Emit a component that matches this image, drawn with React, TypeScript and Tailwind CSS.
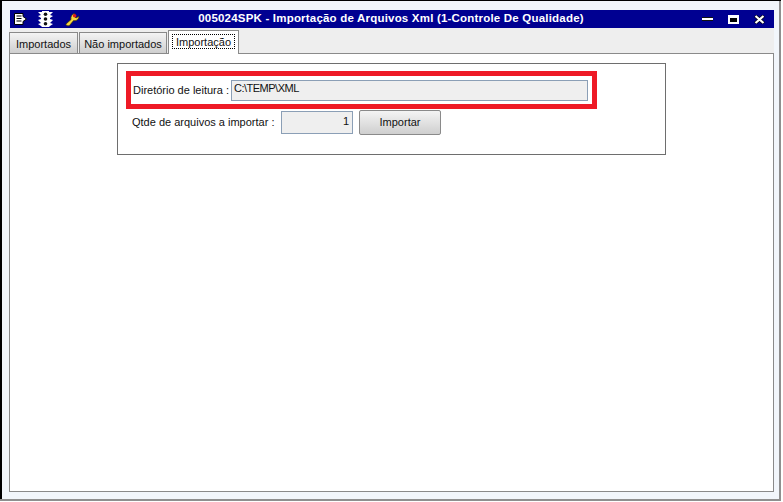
const FONT = "font-['Liberation_Sans',sans-serif]"

function TrafficLight() {
  return (
    <svg width="15" height="16" viewBox="0 0 15 16" className="block">
      <path d="M4 0h7v1h4l-3 3 3 1-3 2v1l3 1-3 3 3 1-3 2-1 1H4l-1-1-3-2 3-1-3-3 3-1V7L0 5l3-1-3-3h4z" fill="#fff" />
      <circle cx="7.5" cy="3.2" r="1.8" fill="#111" />
      <circle cx="7.5" cy="8" r="1.8" fill="#111" />
      <circle cx="7.5" cy="12.8" r="1.8" fill="#111" />
    </svg>
  )
}

function Wrench() {
  return (
    <svg width="15" height="15" viewBox="0 0 15 15" className="block">
      <path d="M0.8 12.2 6 7.6C5.4 4.6 7 2 9.6 1.4L8.6 3.6 11 6l3-1.8c0 2.8-2.4 5-5.4 4.4l-4.4 5.2H2z" fill="#f6d73f" stroke="#3c3000" strokeWidth="0.7" />
      <circle cx="9.6" cy="3.8" r="1.8" fill="#e21a1a" />
    </svg>
  )
}

function MenuIcon() {
  return (
    <svg width="13" height="12" viewBox="0 0 13 12" className="block">
      <path d="M0.5 0.5h8.5v3l3.5 2.5-3.5 2.5v3H0.5z" fill="#fff" stroke="#000" />
      <path d="M2.5 3h5M2.5 5.5h5M2.5 8h5" stroke="#000" strokeWidth="1.2" />
    </svg>
  )
}

function CloseGlyph() {
  return (
    <svg width="11" height="9" viewBox="0 0 11 9" className="block">
      <path d="M1.2 0.8 9.8 8.2M9.8 0.8 1.2 8.2" stroke="#000" strokeWidth="3.4" />
      <path d="M1.5 1 9.5 8M9.5 1 1.5 8" stroke="#fff" strokeWidth="2.2" />
    </svg>
  )
}

function Tab({ label, width, active }: { label: string; width: string; active?: boolean }) {
  if (active) {
    return (
      <div className={`${width} h-[24px] -mb-px z-10 p-[3px] pb-[4px] bg-white border border-b-0 border-[#8a8a8a]`}>
        <span className="block h-[15px] text-center leading-[14px] border border-dotted border-black">{label}</span>
      </div>
    )
  }
  return (
    <div className={`${width} h-[21px] text-center leading-[22px] border border-b-0 border-[#8a8a8a] bg-gradient-to-b from-[#f4f4f4] to-[#cfcfcf]`}>
      {label}
    </div>
  )
}

export default function App() {
  return (
    <div className={`${FONT} w-[783px] h-[502px] bg-white text-[11px] text-[#111] flex flex-col`}>
      <div className="h-[501px] w-[781px] flex border-t border-b-2 border-t-black border-b-[#8f8f8f]">
        <div className="w-[2px] bg-black" />
        <div className="flex-1 flex flex-col bg-[#f2f6fb] border-r-2 border-[#8f8f8f] pl-[7px] pr-[5px] pt-[9px] pb-[7px]">
          {/* Title bar */}
          <div className="h-[18px] ml-[1px] bg-[#000091] flex items-center text-white">
            <span className="ml-[4px]"><MenuIcon /></span>
            <span className="ml-[11px]"><TrafficLight /></span>
            <span className="ml-[12px]"><Wrench /></span>
            <span className="flex-1 text-center font-bold text-[11.5px] tracking-[0.2px] whitespace-nowrap pl-[75px] pr-[75px]">
              005024SPK - Importação de Arquivos Xml (1-Controle De Qualidade)
            </span>
            <div className="flex items-center pr-[9px]">
              <div className="w-[11px] h-[4px] bg-white border-y border-[#111]" />
              <div className="ml-[15px] w-[11px] h-[9px] border-2 border-t-[3px] border-white bg-black" />
              <div className="ml-[15px]"><CloseGlyph /></div>
            </div>
          </div>

          {/* Tabs */}
          <div className="h-[25px] flex items-end gap-[1px] bg-[#eeeeee] relative z-10">
            <Tab label="Importados" width="w-[69px]" />
            <Tab label="Não importados" width="w-[88px]" />
            <Tab label="Importação" width="w-[71px]" active />
          </div>

          {/* Page */}
          <div className="flex-1 bg-white border border-[#8a8a8a] pt-[9px] pl-[107px]">
            <div className="w-[549px] h-[92px] border border-[#6e6e6e] pl-[8px] pt-[7px]">
              <div className="w-[471px] h-[38px] border-[5px] border-[#ee1a26] flex items-center pl-[2px]">
                <span className="w-[98px] whitespace-nowrap">Diretório de leitura :</span>
                <div className="w-[357px] h-[21px] bg-[#efefef] border border-[#8b9fb6] pl-[2px] leading-[15px] tracking-[-0.5px]">C:\TEMP\XML</div>
              </div>
              <div className="flex items-center h-[25px] mt-[1px]">
                <span className="w-[155px] pl-[6px] whitespace-nowrap">Qtde de arquivos a importar :</span>
                <div className="w-[72px] h-[23px] bg-[#efefef] border border-[#8b9fb6] text-right pr-[3px] leading-[18px]">1</div>
                <button className="ml-[6px] w-[82px] h-[25px] rounded-[2px] border border-[#8a8a8a] bg-gradient-to-b from-[#f4f4f4] to-[#cfcfcf]">Importar</button>
              </div>
            </div>
          </div>
        </div>
      </div>
    </div>
  )
}
